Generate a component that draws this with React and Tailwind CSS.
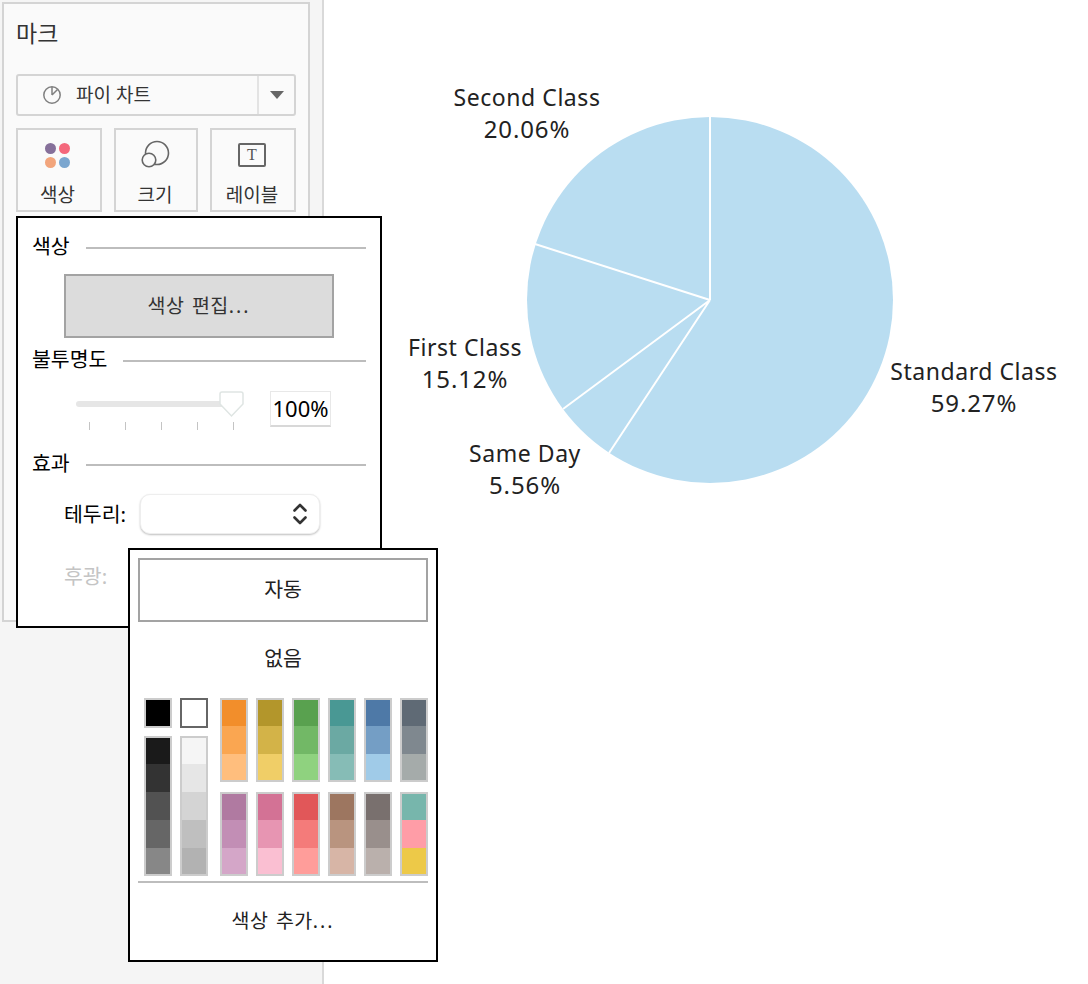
import React from 'react';

const font = { fontFamily: '"Noto Sans", "Noto Sans CJK KR", sans-serif' };

const tallStrips = [
  ['#1a1a1a', '#333333', '#525252', '#666666', '#878787'],
  ['#f5f5f5', '#e6e6e6', '#d4d4d4', '#bfbfbf', '#b2b2b2'],
];

const topStrips = [
  ['#f28e2b', '#faa651', '#ffbe7d'],
  ['#b3962b', '#d3b348', '#f0ce67'],
  ['#59a14f', '#72b866', '#8fd27f'],
  ['#499894', '#6ba9a3', '#86bcb6'],
  ['#4e79a7', '#749ec5', '#a0cbe8'],
  ['#5f6a75', '#7f888f', '#a5abaa'],
];

const bottomStrips = [
  ['#b07aa1', '#c28eb5', '#d4a6c8'],
  ['#d37295', '#e795b2', '#fabfd2'],
  ['#e15759', '#f47b7a', '#ff9d9a'],
  ['#9d7660', '#b9947f', '#d7b5a6'],
  ['#79706e', '#998f8c', '#bab0ac'],
  ['#77b6ac', '#ff9da7', '#edc948'],
];

const labels = [
  { x: 527, lines: ['Second Class', '20.06%'], y: 106 },
  { x: 465, lines: ['First Class', '15.12%'], y: 356 },
  { x: 525, lines: ['Same Day', '5.56%'], y: 462 },
  { x: 974, lines: ['Standard Class', '59.27%'], y: 380 },
];

function Strip({ colors }) {
  return (
    <div className="flex flex-col w-[28px] border-2 border-[#cccccc]">
      {colors.map((c, i) => (
        <div
          key={i}
          className={i === 0 || i === colors.length - 1 ? 'h-[26px]' : 'h-[28px]'}
          style={{ backgroundColor: c }}
        />
      ))}
    </div>
  );
}

function Section({ title, className }) {
  return (
    <div className={`flex items-center gap-[16px] pr-[14px] ${className}`}>
      <span className="text-[20.5px] leading-[26px] text-black">{title}</span>
      <div className="flex-1 h-[2px] bg-[#bdbdbd] mt-[3px]" />
    </div>
  );
}

function MarkButton({ width, label, shift, children }) {
  return (
    <div className={`${width} ${shift} h-[84px] border-2 border-[#d4d4d4] flex flex-col items-center`}>
      <div className="h-[50px] flex items-center justify-center">{children}</div>
      <span className="text-[19px] leading-[24px] mt-[3px] text-[#333333]">{label}</span>
    </div>
  );
}

export default function App() {
  return (
    <div className="relative flex w-[1088px] h-[984px] overflow-hidden bg-white" style={font}>
      <aside className="w-[324px] h-full bg-[#f5f5f5] border-r-2 border-[#d9d9d9] pt-[2px] pl-[2px]">
        <div className="w-[308px] h-[620px] bg-[#fafafa] border-2 border-[#d4d4d4] px-[12px] pt-[12px]">
          <div className="text-[23px] leading-[34px] text-[#333333]">마크</div>
          <div className="mt-[24px] w-[280px] h-[42px] flex items-center border-2 border-[#d4d4d4] rounded-[3px]">
            <div className="flex-1 flex items-center pl-[24px] gap-[14px]">
              <svg width="20" height="20" viewBox="0 0 20 20" fill="none" stroke="#808080" strokeWidth="1.5">
                <circle cx="10" cy="10" r="8.2" />
                <path d="M10 10V2M10 10L15.5 4.5" />
              </svg>
              <span className="text-[19px] leading-[24px] text-[#333333]">파이 차트</span>
            </div>
            <div className="w-[37px] h-full border-l-2 border-[#e3e3e3] flex items-center justify-center">
              <div className="w-0 h-0 border-l-[7px] border-r-[7px] border-t-[8px] border-l-transparent border-r-transparent border-t-[#666666]" />
            </div>
          </div>
          <div className="mt-[12px] flex gap-[12px] w-[280px]">
            <MarkButton width="w-[86px]" shift="pr-[3px]" label="색상">
              <div className="grid grid-cols-2 gap-x-[3px] gap-y-[3px]">
                <div className="w-[11px] h-[11px] rounded-full bg-[#86709a]" />
                <div className="w-[11px] h-[11px] rounded-full bg-[#f4687c]" />
                <div className="w-[11px] h-[11px] rounded-full bg-[#f2a57c]" />
                <div className="w-[11px] h-[11px] rounded-full bg-[#7ba6cf]" />
              </div>
            </MarkButton>
            <MarkButton width="w-[84px]" shift="pr-[2px]" label="크기">
              <svg width="30" height="30" viewBox="0 0 30 30" fill="none" stroke="#666666" strokeWidth="1.6">
                <circle cx="17" cy="13" r="11.5" />
                <circle cx="9" cy="20" r="6.8" fill="#fafafa" />
              </svg>
            </MarkButton>
            <MarkButton width="flex-1" shift="pr-[2px]" label="레이블">
              <div className="w-[28px] h-[24px] border-2 border-[#666666] rounded-[2px] flex items-center justify-center text-[16px] leading-none text-[#555555]" style={{ fontFamily: '"Liberation Serif", serif' }}>
                T
              </div>
            </MarkButton>
          </div>
        </div>
      </aside>

      <main className="flex-1">
        <svg className="absolute left-0 top-0 pointer-events-none" width="1088" height="984" viewBox="0 0 1088 984">
          <circle cx="710" cy="300" r="183" fill="#b9ddf1" />
          <path d="M710 300V117M710 300L609 453M710 300L563 409M710 300L535 244" stroke="#ffffff" strokeWidth="2" fill="none" />
          {labels.map((l) => (
            <text key={l.x} textAnchor="middle" fill="#222222">
              <tspan x={l.x} y={l.y} fontSize="23" letterSpacing="0.55">{l.lines[0]}</tspan>
              <tspan x={l.x} y={l.y + 32} fontSize="24" letterSpacing="0.9">{l.lines[1]}</tspan>
            </text>
          ))}
        </svg>
      </main>

      <div className="absolute left-[16px] top-[216px] w-[366px] h-[412px] bg-white border-2 border-black pl-[14px]">
        <Section title="색상" className="mt-[15px]" />
        <div className="ml-[32px] mt-[15px] w-[270px] h-[64px] bg-[#dcdcdc] border-2 border-[#a3a3a3] flex items-center justify-center text-[19.5px] tracking-[0.5px] [word-spacing:2px] text-[#333333]">
          색상 편집<span className="tracking-[2px]">...</span>
        </div>
        <Section title="불투명도" className="mt-[8px]" />
        <div className="flex items-start ml-[44px] mt-[19px]">
          <div className="relative w-[170px] h-[40px]">
            <div className="absolute left-0 top-[10px] w-[150px] h-[6px] rounded-full bg-[#e6e6e6]" />
            <svg className="absolute left-[143px] top-0" width="25" height="27" viewBox="0 0 25 27">
              <path d="M3 1H22a2 2 0 0 1 2 2V13L12.5 25L1 13V3a2 2 0 0 1 2-2Z" fill="#ffffff" stroke="#dfe5e3" strokeWidth="1.5" />
            </svg>
            <div className="absolute left-[13px] top-[31px] flex gap-[35px]">
              {[0, 1, 2, 3, 4].map((i) => (
                <div key={i} className="w-px h-[8px] bg-[#c4c4c4]" />
              ))}
            </div>
          </div>
          <div className="ml-[24px] w-[61px] h-[36px] border border-[#e8e8e8] border-b-2 border-b-[#d8d8d8] flex items-center justify-center text-[22px] text-black">
            100%
          </div>
        </div>
        <Section title="효과" className="mt-[19px]" />
        <div className="flex items-center ml-[32px] mt-[18px]">
          <span className="w-[76px] text-[20.5px] text-black">테두리:</span>
          <div className="w-[180px] h-[40px] rounded-[10px] border border-[#eeeeee] shadow-[0_1px_2px_rgba(0,0,0,0.25)] bg-white flex items-center justify-end pr-[11px]">
            <svg width="16" height="24" viewBox="0 0 16 24" fill="none" stroke="#333333" strokeWidth="2.6" strokeLinecap="round" strokeLinejoin="round">
              <path d="M2.5 8.5L8 3l5.5 5.5M2.5 15.5L8 21l5.5-5.5" />
            </svg>
          </div>
        </div>
        <div className="ml-[32px] mt-[28px] text-[20.5px] leading-[28px] text-[#c4c4c4]">후광:</div>
      </div>

      <div className="absolute left-[128px] top-[548px] w-[310px] h-[414px] bg-white border-2 border-black px-[8px] pt-[8px]">
        <div className="h-[64px] pb-[2px] border-2 border-[#a3a3a3] flex items-center justify-center text-[20.5px] text-[#222222]">자동</div>
        <div className="h-[76px] pb-[4px] flex items-center justify-center text-[20.5px] text-[#222222]">없음</div>
        <div className="flex pl-[6px]">
          <div className="flex flex-col gap-[8px] w-[28px]">
            <div className="h-[30px] bg-black border-2 border-[#cccccc]" />
            <Strip colors={tallStrips[0]} />
          </div>
          <div className="flex flex-col gap-[8px] w-[28px] ml-[8px]">
            <div className="h-[30px] bg-white border-2 border-[#666666]" />
            <Strip colors={tallStrips[1]} />
          </div>
          <div className="flex flex-col gap-[10px] ml-[12px]">
            <div className="flex gap-[8px]">
              {topStrips.map((s, i) => <Strip key={i} colors={s} />)}
            </div>
            <div className="flex gap-[8px]">
              {bottomStrips.map((s, i) => <Strip key={i} colors={s} />)}
            </div>
          </div>
        </div>
        <div className="mt-[5px] h-[2px] bg-[#bdbdbd]" />
        <div className="mt-[20px] text-center text-[19.5px] tracking-[0.5px] [word-spacing:2px] leading-[36px] text-[#222222]">
          색상 추가<span className="tracking-[2px]">...</span>
        </div>
      </div>
    </div>
  );
}
